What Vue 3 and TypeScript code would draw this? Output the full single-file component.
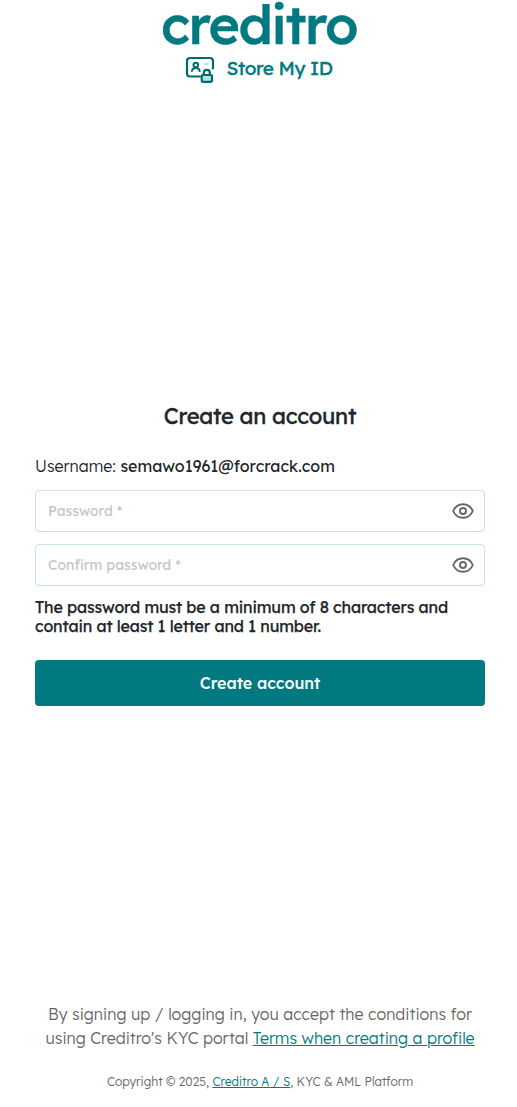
<script setup lang="ts">
import { ref } from 'vue'

interface Field {
  id: string
  label: string
}

const username = 'semawo1961@forcrack.com'
const fields: Field[] = [
  { id: 'password', label: 'Password *' },
  { id: 'confirm', label: 'Confirm password *' },
]
const values = ref<Record<string, string>>({ password: '', confirm: '' })
const visible = ref<Record<string, boolean>>({ password: false, confirm: false })
</script>

<template>
  <div class="page">
    <header class="brand">
      <svg class="wordmark" width="200" height="50" viewBox="0 0 200 50" role="img" aria-label="creditro">
        <text x="1" y="44.300" textLength="196" lengthAdjust="spacingAndGlyphs">creditro</text>
      </svg>
      <div class="product">
        <svg class="id-icon" width="30" height="28" viewBox="0 0 30 28" fill="none">
          <path d="M15 20.500H5Q2 20.500 2 17.500V5Q2 2 5 2H25Q28 2 28 5V12.500" stroke="#006a6e" stroke-width="2.200" stroke-linecap="round" />
          <circle cx="10.800" cy="9" r="2.300" stroke="#006a6e" stroke-width="2" />
          <path d="M6.800 15.800Q7 12 10.800 12Q14.500 12 14.800 15.800" stroke="#006a6e" stroke-width="2" />
          <path d="M19 8H23.500" stroke="#b9dfdf" stroke-width="2" />
          <path d="M18.800 19V16.800A3 3 0 0 1 24.800 16.800V19" stroke="#006a6e" stroke-width="2.200" />
          <rect x="16.700" y="19" width="10.300" height="6.800" rx="1.200" fill="#b9dfdf" stroke="#006a6e" stroke-width="2.200" />
        </svg>
        <span class="product-name">Store My ID</span>
      </div>
    </header>

    <main class="form">
      <h1>Create an account</h1>
      <p class="username">Username: <b>{{ username }}</b></p>
      <div v-for="field in fields" :key="field.id" class="field">
        <input
          v-model="values[field.id]"
          :type="visible[field.id] ? 'text' : 'password'"
          :placeholder="field.label"
          :aria-label="field.label"
        />
        <button class="eye" type="button" aria-label="Toggle visibility" @click="visible[field.id] = !visible[field.id]">
          <svg width="22" height="16" viewBox="0 0 22 16" fill="none" stroke="#666" stroke-width="1.900">
            <path d="M1.200 8C3.100 3.500 6.700 1.200 11 1.200S18.900 3.500 20.800 8C18.900 12.500 15.300 14.800 11 14.800S3.100 12.500 1.200 8Z" stroke-linejoin="round" />
            <circle cx="11" cy="8" r="3" />
          </svg>
        </button>
      </div>
      <p class="hint">The password must be a minimum of 8 characters and<br />contain at least 1 letter and 1 number.</p>
      <button class="submit" type="button">Create account</button>
    </main>

    <footer>
      <p class="terms">
        By signing up / logging in, you accept the conditions for<br />
        using Creditro's KYC portal <a href="#">Terms when creating a profile</a>
      </p>
      <p class="copyright">Copyright © 2025, <a href="#">Creditro A / S</a>, KYC &amp; AML Platform</p>
    </footer>
  </div>
</template>

<style>
body {
  margin: 0;
  background: #fff;
}
</style>

<style scoped>
.page {
  box-sizing: border-box;
  height: 1107px;
  padding: 0 32px 0 35px;
  display: flex;
  flex-direction: column;
  font-family: Lexend, Inter, "Liberation Sans", sans-serif;
  font-size: 16px;
  color: #212529;
  white-space: nowrap;
}
.brand {
  height: 400px;
  display: flex;
  flex-direction: column;
  align-items: center;
}
.wordmark {
  display: block;
  overflow: visible;
}
.wordmark text {
  font-size: 53px;
  font-weight: 500;
  letter-spacing: -1.5px;
  fill: #007a80;
  stroke: #007a80;
  stroke-width: 0.4px;
}
.product {
  display: flex;
  align-items: center;
  gap: 12px;
  height: 28px;
  margin-top: 6px;
  margin-right: 2px;
}
.product-name {
  font-size: 19px;
  line-height: 24px;
  font-weight: 400;
  letter-spacing: -0.4px;
  -webkit-text-stroke: 0.35px;
  color: #007a80;
  margin: -4px 0 0 -1px;
}
.form {
  display: flex;
  flex-direction: column;
}
h1 {
  margin: 0;
  height: 33px;
  line-height: 33px;
  font-size: 22px;
  font-weight: 400;
  letter-spacing: -0.25px;
  -webkit-text-stroke: 0.35px;
  text-align: center;
}
p {
  margin: 0;
}
.username {
  margin: 21px 0 12px;
  height: 24px;
  line-height: 24px;
  font-weight: 300;
}
.username b {
  font-weight: 400;
}
.field {
  box-sizing: border-box;
  display: flex;
  align-items: center;
  height: 42px;
  margin-bottom: 12px;
  padding: 0 10px 0 12px;
  border: 1px solid #c8e3e5;
  border-radius: 4px;
}
input {
  flex: 1;
  min-width: 0;
  padding: 0;
  border: 0;
  outline: 0;
  background: transparent;
  font: inherit;
  font-size: 14px;
  color: #212529;
}
input::placeholder {
  color: #c5c5c5;
  opacity: 1;
}
.eye {
  display: flex;
  padding: 0;
  border: 0;
  background: none;
}
.hint {
  line-height: 19px;
  font-weight: 400;
  letter-spacing: -0.145px;
  -webkit-text-stroke: 0.25px;
}
.submit {
  margin-top: 24px;
  height: 46px;
  border: 0;
  border-radius: 4px;
  background: #007a80;
  color: #fff;
  font: inherit;
  font-weight: 500;
}
footer {
  margin-top: auto;
  height: 105px;
  text-align: center;
  color: #666;
  font-weight: 300;
}
.terms {
  line-height: 24px;
}
a {
  color: #007a80;
  text-decoration: underline;
}
.copyright {
  margin-top: 23px;
  font-size: 12px;
  line-height: 18px;
}
</style>
